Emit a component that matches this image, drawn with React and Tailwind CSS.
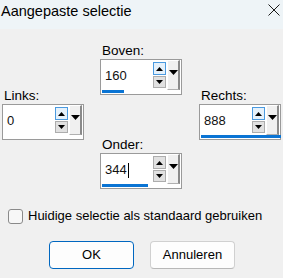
import React from "react";

const font = { fontFamily: '"Liberation Sans", Arial, sans-serif' };

function Up() {
  return (
    <svg width="7" height="4" viewBox="0 0 7 4"><path d="M0 4 L3.5 0 L7 4 Z" fill="#000" /></svg>
  );
}
function Down() {
  return (
    <svg width="7" height="4" viewBox="0 0 7 4"><path d="M0 0 L3.5 4 L7 0 Z" fill="#000" /></svg>
  );
}

function Field({ label, value, bar, upActive, cursor }) {
  return (
    <div className="flex flex-col w-[82px]">
      <div className="h-[16px] text-[13.5px] leading-[16px] pl-[2px] text-black whitespace-nowrap">{label}</div>
      <div className="h-[36px] border border-[#9a9a9a] bg-white flex flex-col">
        <div className="flex h-[30px]">
          <div className="flex-1 flex items-center pl-[4px] pt-[2px] text-[13px] text-[#111]">
            <span>{value}</span>
            {cursor && <span className="w-px h-[15px] bg-black ml-[1px]" />}
          </div>
          <div className="w-[13px] flex flex-col pt-[2px] gap-[1px] mr-[1px]">
            <div
              className={
                "h-[13px] flex items-center justify-center border " +
                (upActive ? "border-[#4a9ae0] bg-[#e5f1fb]" : "border-[#adadad] bg-[#e1e1e1]")
              }
            >
              <Up />
            </div>
            <div className="h-[12px] flex items-center justify-center border border-[#adadad] bg-[#e1e1e1]">
              <Down />
            </div>
          </div>
          <div className="w-[13px] h-[30px] bg-[#f0f0f0] border-l border-t border-l-white border-t-white border-r-2 border-r-[#8a8a8a] border-b border-b-[#b0b0b0] flex justify-center pt-[9px] mr-[1px]">
            <svg width="9" height="5" viewBox="0 0 9 5"><path d="M0 0 L4.5 5 L9 0 Z" fill="#000" /></svg>
          </div>
        </div>
        <div className="mt-auto mb-[1px] h-[3px] px-[1px]">
          <div className="h-full bg-[#0a74d4]" style={{ width: bar }} />
        </div>
      </div>
    </div>
  );
}

export default function App() {
  return (
    <div className="w-[283px] h-[278px] bg-[#f0f0f0] flex flex-col overflow-hidden" style={font}>
      <div className="h-[29px] bg-[#eef4f7] flex items-start justify-between shrink-0">
        <div className="text-[14.5px] leading-[20px] pl-[1px] pt-[1px] text-black">Aangepaste selectie</div>
        <svg width="12" height="12" viewBox="0 0 12 12" className="mt-[4px] mr-[3px]">
          <path d="M0.5 0.5 L11.5 11.5 M11.5 0.5 L0.5 11.5" stroke="#1a1a1a" strokeWidth="1" />
        </svg>
      </div>
      <div className="flex pl-[2px] pt-[14px]">
        <div className="mt-[45px]">
          <Field label="Links:" value="0" bar={0} upActive />
        </div>
        <div className="ml-[16px] flex flex-col gap-[42px]">
          <Field label="Boven:" value="160" bar={22} upActive />
          <Field label="Onder:" value="344" bar={46} cursor />
        </div>
        <div className="ml-[17px] mt-[45px]">
          <Field label="Rechts:" value="888" bar={80} upActive />
        </div>
      </div>
      <div className="flex items-center mt-[19px] pl-[8px]">
        <div className="w-[15px] h-[15px] shrink-0 rounded-[3px] border border-[#8a8a8a] bg-[#f7f7f7]" />
        <span className="ml-[5px] text-[13px] leading-[16px] text-black whitespace-nowrap">
          Huidige selectie als standaard gebruiken
        </span>
      </div>
      <div className="flex mt-[17px] pl-[49px] gap-[16px]">
        <button className="w-[85px] h-[28px] rounded-[4px] border border-[#0067c0] bg-[#fdfdfd] text-[13px] text-black">
          OK
        </button>
        <button className="w-[85px] h-[28px] rounded-[4px] border border-[#d0d0d0] border-b-[#b8b8b8] bg-[#fdfdfd] text-[13px] text-black">
          Annuleren
        </button>
      </div>
    </div>
  );
}
